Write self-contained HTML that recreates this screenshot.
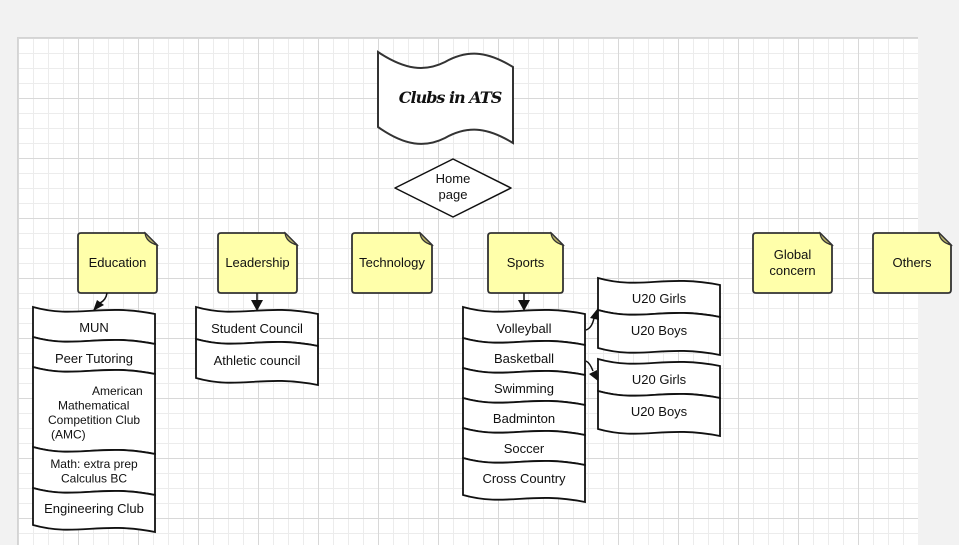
<!DOCTYPE html>
<html><head><meta charset="utf-8"><style>
html,body{margin:0;padding:0;background:#f2f2f2;width:959px;height:544px;overflow:hidden}
#c{position:absolute;left:17px;top:37px;width:900px;height:507px;background-color:#fff;
background-image:linear-gradient(#d8d8d8 1px,transparent 1px),linear-gradient(90deg,#d8d8d8 1px,transparent 1px),linear-gradient(#ececec 1px,transparent 1px),linear-gradient(90deg,#ececec 1px,transparent 1px);
background-size:60px 60px,60px 60px,15px 15px,15px 15px;border-top:1px solid #d4d4d4;border-left:1px solid #d4d4d4}
svg{position:absolute;left:0;top:0}
text{font-family:"Liberation Sans",sans-serif;font-size:13px;fill:#111}
</style></head><body>
<div id="c"></div>
<svg id="s" width="959" height="544" xmlns="http://www.w3.org/2000/svg">
<path d="M378,52 C405,70 425,72 445,62 C470,48 490,53 513,67 L513,143 C490,129 470,124 445,138 C425,148 405,146 378,127 Z" fill="#fff" stroke="#333" stroke-width="2"/>
<text x="450" y="103" text-anchor="middle" style="font-family:'DejaVu Serif',serif;font-style:italic;font-weight:bold;font-size:16px;letter-spacing:-1px">Clubs in ATS</text>
<path d="M453,159 L511,188 L453,217 L395,188 Z" fill="#fff" stroke="#111" stroke-width="1.5" stroke-linejoin="round"/>
<text x="453" y="183" text-anchor="middle">Home</text>
<text x="453" y="199" text-anchor="middle">page</text>
<g id="g"></g>
</svg>
<script>
var g=document.getElementById('g'),h='';
function wave(x0,w,y){return [x0,y,x0+.35*w,y+12,x0+.55*w,y-4,x0+w,y+7];}
function item(x0,w,y1,y2,label,ty){
 var a=wave(x0,w,y1),b=wave(x0,w,y2);
 h+='<path d="M'+a[0]+','+a[1]+' C'+a[2]+','+a[3]+' '+a[4]+','+a[5]+' '+a[6]+','+a[7]+' L'+b[6]+','+b[7]+' C'+b[4]+','+b[5]+' '+b[2]+','+b[3]+' '+b[0]+','+b[1]+' Z" fill="#fff" stroke="#111" stroke-width="1.8"/>';
 var lines=label.split('|'),cx=x0+w/2;
 lines.forEach(function(l,i){var p=l.split('~');h+='<text x="'+(p[1]?(+p[1]):cx)+'" y="'+(ty+i*14.5)+'" text-anchor="'+(p[1]?'start':'middle')+'" style="font-size:'+(lines.length>1?12:13)+'px">'+p[0]+'</text>';});
}
function note(x,w,label){
 var y=233,H=60;
 h+='<path d="M'+(x+3)+','+y+' L'+(x+w-12)+','+y+' L'+(x+w)+','+(y+12)+' L'+(x+w)+','+(y+H-3)+' Q'+(x+w)+','+(y+H)+' '+(x+w-3)+','+(y+H)+' L'+(x+3)+','+(y+H)+' Q'+x+','+(y+H)+' '+x+','+(y+H-3)+' L'+x+','+(y+3)+' Q'+x+','+y+' '+(x+3)+','+y+' Z" fill="#ffffaa" stroke="#333" stroke-width="1.8"/>';
 h+='<path d="M'+(x+w-12)+','+y+' Q'+(x+w-11)+','+(y+9)+' '+(x+w)+','+(y+12)+' Z" fill="#bdb76b" stroke="#333" stroke-width="1.2"/>';
 var l=label.split('|');
 l.forEach(function(t,i){h+='<text x="'+(x+w/2)+'" y="'+(y+34-(l.length-1)*8+i*16)+'" text-anchor="middle">'+t+'</text>';});
}
note(78,79,'Education');note(218,79,'Leadership');note(352,80,'Technology');note(488,75,'Sports');note(753,79,'Global|concern');note(873,78,'Others');
var E=[[307,337,'MUN',332],[337,367,'Peer Tutoring',363],[367,447,'American~92|Mathematical~58|Competition Club~48|(AMC)~51',395],[447,488,'Math: extra prep|Calculus BC',468],[488,525,'Engineering Club',513]];
E.forEach(function(e){item(33,122,e[0],e[1],e[2],e[3]);});
item(196,122,307,339,'Student Council',333);item(196,122,339,378,'Athletic council',365);
var S=[[307,338,'Volleyball',333],[338,368,'Basketball',363],[368,398,'Swimming',393],[398,428,'Badminton',423],[428,458,'Soccer',453],[458,495,'Cross Country',483]];
S.forEach(function(e){item(463,122,e[0],e[1],e[2],e[3]);});
item(598,122,278,310,'U20 Girls',303);item(598,122,310,348,'U20 Boys',335);
item(598,122,359,391,'U20 Girls',384);item(598,122,391,429,'U20 Boys',416);
var L='fill="none" stroke="#111" stroke-width="1.5"';
h+='<path d="M107,293 Q106,300 100,303" '+L+'/><path d="M93,311 L97,300 L104,305 Z" fill="#111"/>';
h+='<path d="M257,293 L257,301" '+L+'/><path d="M251,300 L263,300 L257,311 Z" fill="#111"/>';
h+='<path d="M524,293 L524,301" '+L+'/><path d="M518,300 L530,300 L524,311 Z" fill="#111"/>';
h+='<path d="M586,330 Q592,328 594,318" '+L+'/><path d="M598,308 L599,320 L590,318 Z" fill="#111"/>';
h+='<path d="M586,361 Q590,363 593,371" '+L+'/><path d="M598,381 L589,374 L597,370 Z" fill="#111"/>';
g.innerHTML=h;
</script>
</body></html>
